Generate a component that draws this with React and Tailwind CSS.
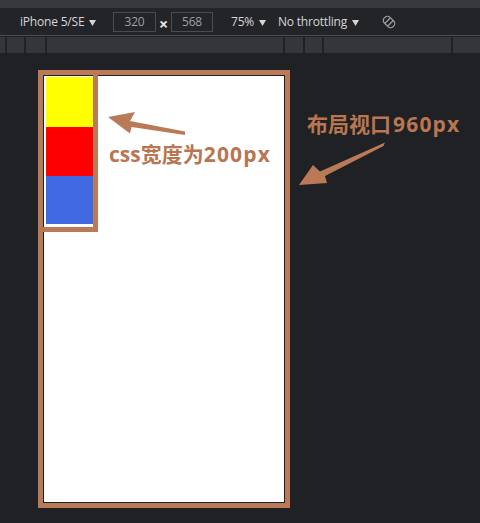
import React from "react";

const Caret = () => (
  <svg width="7" height="6" viewBox="0 0 7 6" className="mt-[1px] shrink-0">
    <path d="M0 0 H7 L3.5 6 Z" fill="#d6d6d6" />
  </svg>
);

export default function App() {
  const segs = [5, 17, 19, 236, 18, 17, 127, 27];
  return (
    <div className="relative w-[480px] h-[523px] overflow-hidden bg-[#202124] flex flex-col font-['Open_Sans','Noto_Sans',sans-serif]">
      <div className="h-[8px] bg-[#38393c] shrink-0" />
      <div className="h-[27px] bg-[#232427] shrink-0 flex items-center pt-px text-[12px] text-[#d6d6d6] tracking-[-0.2px]">
        <div className="flex items-center justify-between ml-[20px] w-[76px]">
          <span>iPhone 5/SE</span>
          <Caret />
        </div>
        <div className="ml-[17px] w-[43px] h-[20px] border border-[#4a4b4e] flex items-center justify-center text-[#9aa0a6]">320</div>
        <span className="w-[15px] text-center text-[#e6e6e6] text-[16px] font-bold leading-none mt-[3px]">×</span>
        <div className="w-[42px] h-[20px] border border-[#4a4b4e] flex items-center justify-center text-[#9aa0a6]">568</div>
        <div className="flex items-center justify-between ml-[18px] w-[35px]">
          <span>75%</span>
          <Caret />
        </div>
        <div className="flex items-center justify-between ml-[12px] w-[81px]">
          <span>No throttling</span>
          <Caret />
        </div>
        <svg width="14" height="14" viewBox="0 0 14 14" className="ml-[23px]">
          <g transform="rotate(-45 7 7)" fill="none" stroke="#a0a0a0" strokeWidth="1.2">
            <rect x="3" y="0.8" width="8" height="12.4" rx="3.6" />
            <line x1="3.3" y1="5" x2="10.7" y2="5" />
            <line x1="3.3" y1="9" x2="10.7" y2="9" />
          </g>
        </svg>
      </div>
      <div className="h-px bg-[#4b4c4f] shrink-0" />
      <div className="h-px bg-[#202124] shrink-0" />
      <div className="h-[16px] shrink-0 flex gap-[2px] bg-[#202124]">
        {segs.map((w, i) => (
          <div key={i} className="h-full bg-[#35363a]" style={{ width: w }} />
        ))}
      </div>
      <div className="flex-1">
        <div className="ml-[44px] mt-[23px] w-[240px] h-[426px] bg-white">
          <div className="pt-px pl-[2px] flex flex-col">
            <div className="w-[48px] h-[50px] bg-[#ffff00]" />
            <div className="w-[48px] h-[49px] bg-[#ff0000]" />
            <div className="w-[48px] h-[48px] bg-[#4169e1]" />
          </div>
        </div>
      </div>

      {/* annotation rectangles */}
      <div className="absolute left-[38px] top-[70px] w-[252px] h-[438px] border-[5px] border-[#bb7a57]" />
      <div className="absolute left-[38px] top-[70px] w-[60px] h-[162px] border-[5px] border-[#bb7a57]" />

      {/* arrows */}
      <svg className="absolute left-0 top-0 pointer-events-none" width="480" height="523" viewBox="0 0 480 523">
        <polygon
          fill="#bb7a57"
          points="108,117 135,112 130,121 185,131.5 185,135 131.5,127 130,133.5"
        />
        <polygon
          fill="#bb7a57"
          points="299,185 313,165 320,171.5 385,142.5 383.5,146 325,176 327,183"
        />
      </svg>

      {/* labels */}
      <div className="absolute left-[109px] top-[144px] text-[21px] leading-[21px] font-bold text-[#b97650] whitespace-nowrap font-['Open_Sans','Noto_Sans_CJK_SC',sans-serif]">
        css宽度为<span className="tracking-[1.2px]">200px</span>
      </div>
      <div className="absolute left-[307px] top-[114px] text-[21px] leading-[21px] font-bold text-[#b97650] whitespace-nowrap font-['Open_Sans','Noto_Sans_CJK_SC',sans-serif]">
        布局视口<span className="ml-[2px] tracking-[1.2px]">960px</span>
      </div>
    </div>
  );
}
